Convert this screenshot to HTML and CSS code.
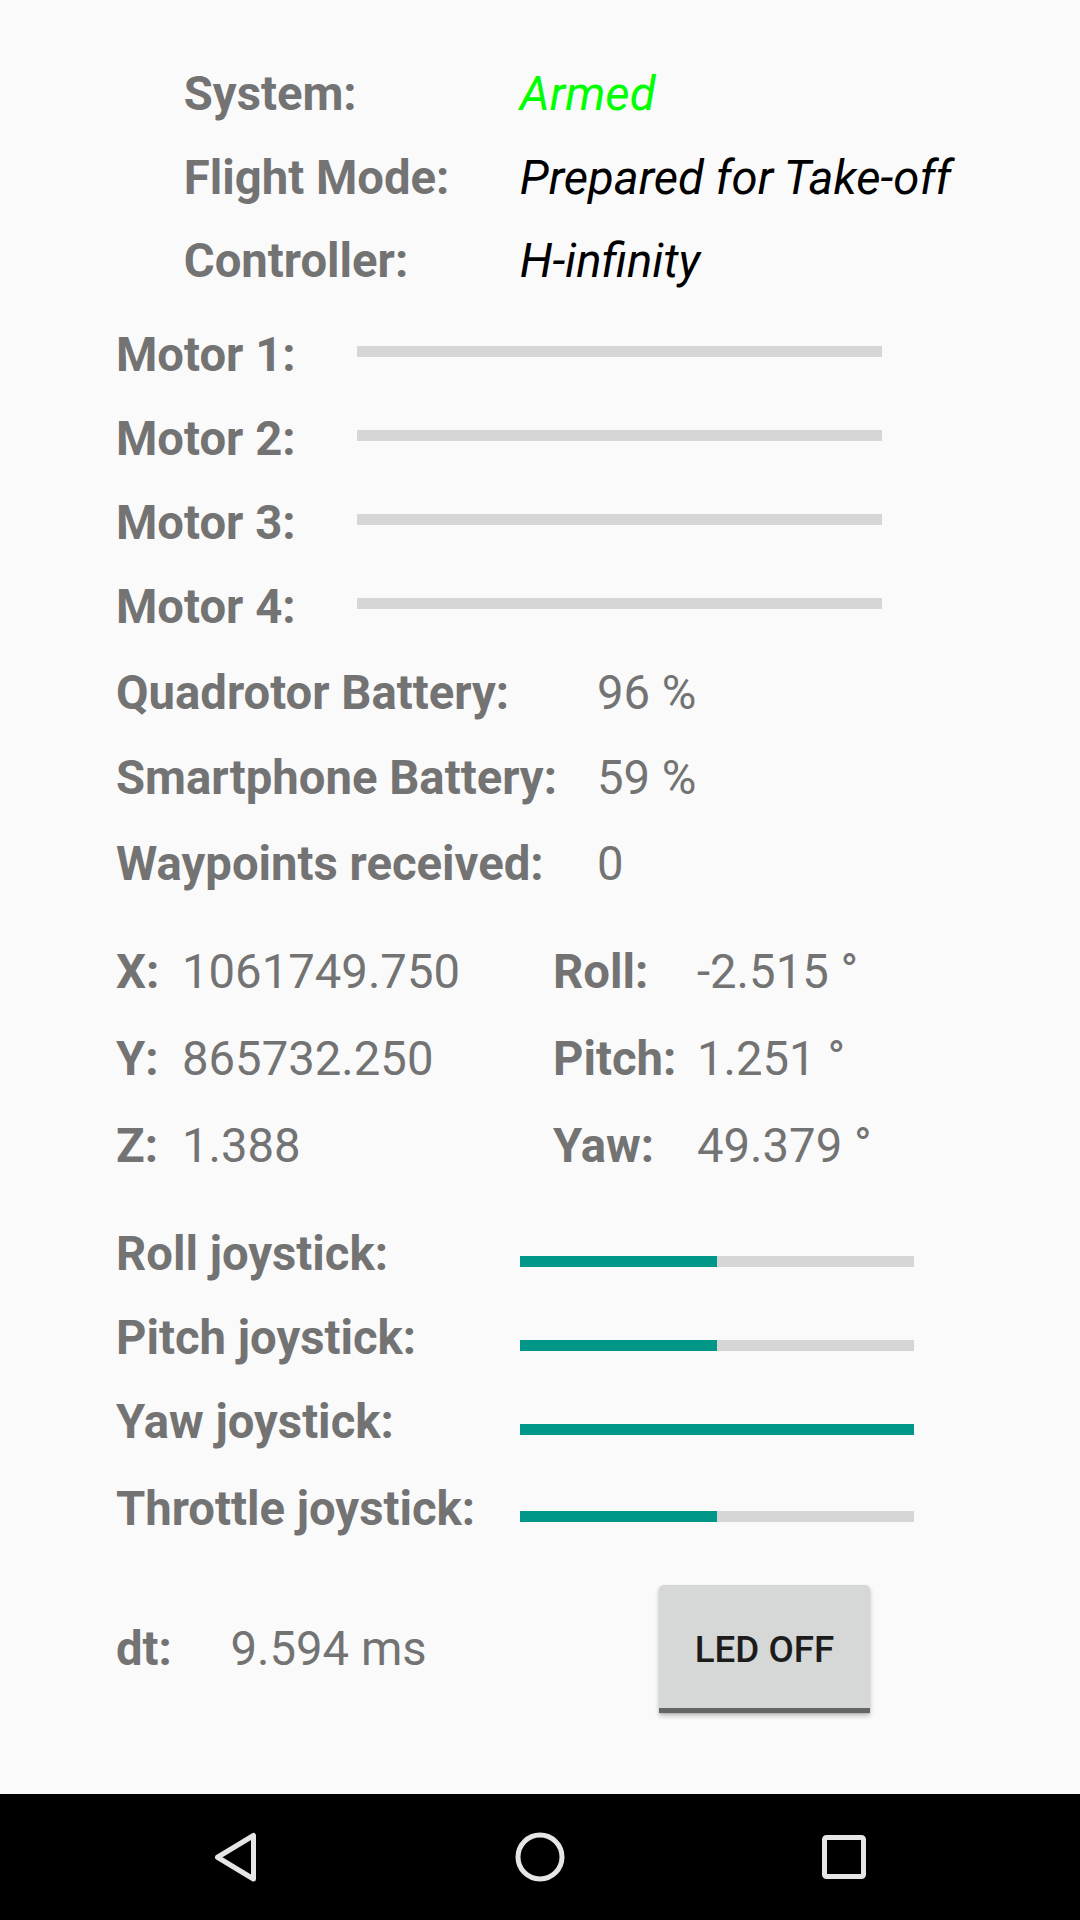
FILE: index.html
```html
<!DOCTYPE html>
<html lang="en">
<head>
<meta charset="utf-8">
<title>Quadrotor</title>
<link rel="stylesheet" href="styles.css">
</head>
<body>
<div class="screen">
  <main class="content">
    <section class="status">
      <div class="srow"><span class="label slabel">System:</span><span class="sval armed">Armed</span></div>
      <div class="srow"><span class="label slabel">Flight Mode:</span><span class="sval">Prepared for Take-off</span></div>
      <div class="srow"><span class="label slabel">Controller:</span><span class="sval">H-infinity</span></div>
    </section>

    <section class="motors">
      <div class="mrow"><span class="label mlabel">Motor 1:</span><div class="track mtrack"><div class="fill" style="width:0%"></div></div></div>
      <div class="mrow"><span class="label mlabel">Motor 2:</span><div class="track mtrack"><div class="fill" style="width:0%"></div></div></div>
      <div class="mrow"><span class="label mlabel">Motor 3:</span><div class="track mtrack"><div class="fill" style="width:0%"></div></div></div>
      <div class="mrow"><span class="label mlabel">Motor 4:</span><div class="track mtrack"><div class="fill" style="width:0%"></div></div></div>
    </section>

    <section class="batteries">
      <div class="brow"><span class="label blabel">Quadrotor Battery:</span><span class="val">96 %</span></div>
      <div class="brow"><span class="label blabel">Smartphone Battery:</span><span class="val">59 %</span></div>
      <div class="brow"><span class="label blabel">Waypoints received:</span><span class="val">0</span></div>
    </section>

    <section class="pose">
      <span class="label">X:</span><span class="val">1061749.750</span><span class="label">Roll:</span><span class="val">-2.515 °</span>
      <span class="label">Y:</span><span class="val">865732.250</span><span class="label">Pitch:</span><span class="val">1.251 °</span>
      <span class="label">Z:</span><span class="val">1.388</span><span class="label">Yaw:</span><span class="val">49.379 °</span>
    </section>

    <section class="joysticks">
      <div class="jrow"><span class="label jlabel">Roll joystick:</span><div class="track jtrack"><div class="fill" style="width:50%"></div></div></div>
      <div class="jrow"><span class="label jlabel">Pitch joystick:</span><div class="track jtrack"><div class="fill" style="width:50%"></div></div></div>
      <div class="jrow"><span class="label jlabel">Yaw joystick:</span><div class="track jtrack"><div class="fill" style="width:100%"></div></div></div>
      <div class="jrow throttle"><span class="label jlabel">Throttle joystick:</span><div class="track jtrack"><div class="fill" style="width:50%"></div></div></div>
    </section>

    <section class="footer">
      <span class="label dlabel">dt:</span><span class="val dval">9.594 ms</span>
      <button class="toggle" type="button">LED OFF</button>
    </section>
  </main>

  <nav class="navbar">
    <svg class="nav-icon" width="56" height="56" viewBox="0 0 56 56" aria-label="Back">
      <path d="M45.5 6.5 L45.5 50 L9.5 28.25 Z" fill="none" stroke="#e6e6e6" stroke-width="5" stroke-linejoin="round"/>
    </svg>
    <svg class="nav-icon" width="56" height="56" viewBox="0 0 56 56" aria-label="Home">
      <circle cx="28" cy="28" r="22" fill="none" stroke="#e6e6e6" stroke-width="5"/>
    </svg>
    <svg class="nav-icon" width="56" height="56" viewBox="0 0 56 56" aria-label="Recents">
      <rect x="8.5" y="8.5" width="39" height="39" rx="2" fill="none" stroke="#e6e6e6" stroke-width="5"/>
    </svg>
  </nav>
</div>
</body>
</html>
```

FILE: styles.css
```css
* { box-sizing: border-box; }

html, body {
  margin: 0;
  padding: 0;
  background: #fafafa;
}

body {
  font-family: Roboto, "Noto Sans", "Liberation Sans", sans-serif;
}

.screen {
  width: 1080px;
  height: 1920px;
  display: flex;
  flex-direction: column;
  overflow: hidden;
}

.content {
  flex: 1;
  padding: 53px 0 0 116px;
  color: #737373;
  font-size: 47.25px;
}

.label {
  font-weight: 700;
  white-space: nowrap;
}

.val {
  font-weight: 400;
  white-space: nowrap;
}

/* status block */
.status {
  padding-left: 67.75px;
}

.srow {
  display: flex;
  height: 83.5px;
  line-height: 83.5px;
}

.slabel {
  width: 336px;
}

.sval {
  font-style: italic;
  color: #000000;
}

.sval.armed {
  color: #00ff00;
}

/* motors */
.motors {
  margin-top: 9.05px;
}

.mrow {
  display: flex;
  align-items: center;
  height: 84px;
  line-height: 84px;
}

.mlabel {
  width: 241px;
}

.track {
  height: 10.5px;
  background: #d6d6d6;
  overflow: hidden;
}

.fill {
  height: 100%;
  background: #009688;
}

.mtrack {
  width: 525px;
  margin-bottom: 6.4px;
}

/* batteries */
.batteries {
  margin-top: 2.6px;
}

.brow {
  display: flex;
  height: 85.35px;
  line-height: 85.35px;
}

.blabel {
  width: 481px;
}

/* pose */
.pose {
  margin-top: 21.45px;
  display: grid;
  grid-template-columns: 66px 371px 144px auto;
  grid-auto-rows: 87px;
  line-height: 87px;
}

/* joysticks */
.joysticks {
  margin-top: 22.2px;
}

.jrow {
  display: flex;
  align-items: center;
  height: 84px;
  line-height: 84px;
}

.jrow.throttle {
  margin-top: 3px;
}

.jlabel {
  width: 404px;
}

.jtrack {
  width: 394px;
  margin-top: 15px;
}

/* footer */
.footer {
  margin-top: 34.15px;
  display: flex;
  align-items: center;
  height: 128px;
}

.dlabel {
  width: 114.5px;
  line-height: 56px;
}

.dval {
  width: 428.5px;
  line-height: 56px;
}

.toggle {
  width: 211px;
  height: 128px;
  margin: 0;
  padding: 7px 0 0 0;
  border: none;
  border-radius: 5px 5px 0 0;
  border-bottom: 5px solid #646565;
  background: #d6d7d7;
  color: #1c1c1c;
  font-family: Roboto, "Noto Sans", sans-serif;
  font-weight: 500;
  font-size: 36.75px;
  box-shadow: 0 3px 5px rgba(0, 0, 0, 0.22), 0 1px 2px rgba(0, 0, 0, 0.12);
}

/* nav bar */
.navbar {
  height: 126px;
  flex: 0 0 126px;
  background: #000000;
  display: flex;
  align-items: center;
  justify-content: center;
  gap: 248px;
}

.nav-icon {
  display: block;
}
```
